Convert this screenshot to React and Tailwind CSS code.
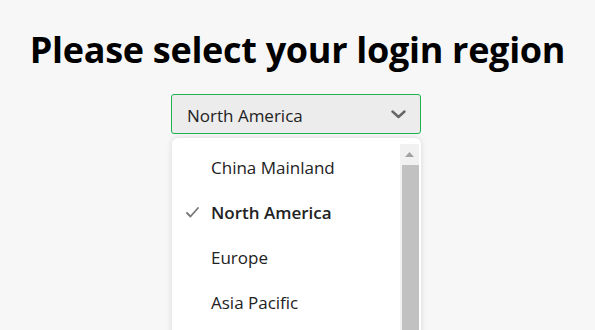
import { useState } from 'react';

const regions = ["China Mainland", "North America", "Europe", "Asia Pacific"];

export default function App() {
  const [selected, setSelected] = useState("North America");

  return (
    <div className="h-[330px] overflow-hidden bg-[#f7f7f7] flex flex-col items-center" style={{ fontFamily: '"Open Sans", sans-serif' }}>
      <h1 className="mt-[23px] text-[36px] leading-[54px] font-bold text-black tracking-[-0.3px]">
        Please select your login region
      </h1>

      <div className="relative mt-[17px] mr-[3px] w-[250px]">
        {/* Select */}
        <button className="w-full h-[40px] flex items-center justify-between pl-[15px] pr-[14px] pt-[3px] bg-[#ececec] border border-[#1fb350] rounded-[3px] text-[17px] text-[#222]">
          <span>{selected}</span>
          <svg width="15" height="9" viewBox="0 0 15 9" fill="none" className="-mt-[3px]">
            <path d="M1.5 1.5L7.5 7L13.5 1.5" stroke="#666" strokeWidth="2.4" strokeLinecap="round" strokeLinejoin="round" />
          </svg>
        </button>

        {/* Dropdown */}
        <div className="absolute left-[1px] right-0 top-[44px] h-[220px] bg-white rounded-[6px] shadow-[0_0_6px_rgba(0,0,0,0.12)] pt-[6px] flex">
          <ul className="flex-1">
            {regions.map((r) => (
              <li
                key={r}
                onClick={() => setSelected(r)}
                className={`h-[45px] pt-[2px] flex items-center text-[17px] text-[#222] cursor-pointer ${r === selected ? "font-semibold" : ""}`}
              >
                <span className="w-[39px] flex justify-center pl-[2px]">
                  {r === selected && (
                    <svg width="13" height="11" viewBox="0 0 13 11" fill="none">
                      <path d="M1 6L4.5 9.5L12 1" stroke="#777" strokeWidth="1.8" strokeLinecap="round" strokeLinejoin="round" />
                    </svg>
                  )}
                </span>
                <span>{r}</span>
              </li>
            ))}
          </ul>
          {/* Scrollbar */}
          <div className="w-[19px] mr-[2px] bg-[#f1f1f1] flex flex-col">
            <div className="h-[21px] flex items-center justify-center">
              <svg width="9" height="5" viewBox="0 0 9 5">
                <path d="M0 5L4.5 0L9 5Z" fill="#a3a3a3" />
              </svg>
            </div>
            <div className="flex-1 ml-[2px] bg-[#c1c1c1]" />
          </div>
        </div>
      </div>
    </div>
  );
}
